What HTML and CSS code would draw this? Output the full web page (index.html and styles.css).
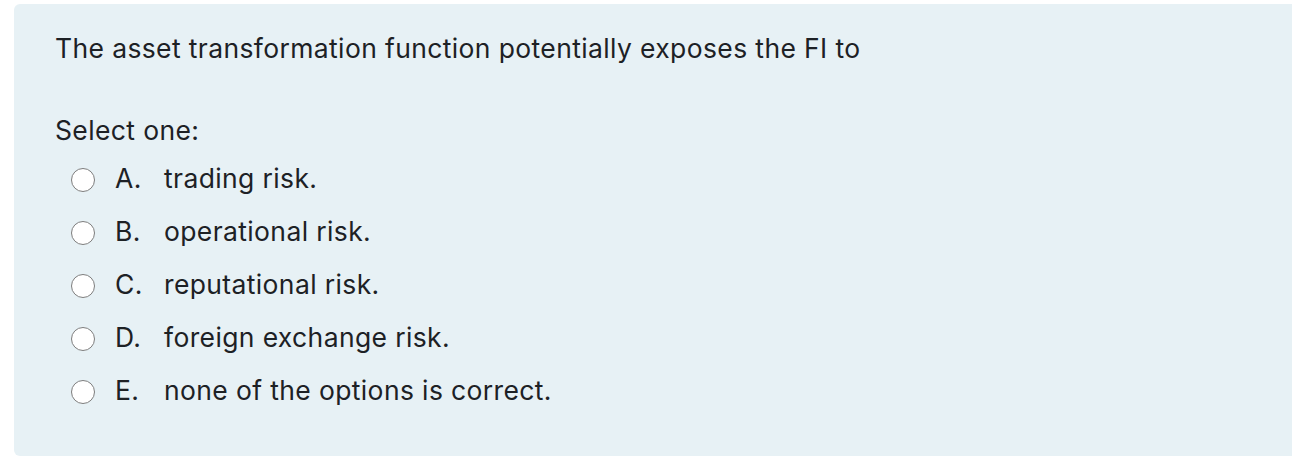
FILE: index.html
```html
<!DOCTYPE html>
<html>
<head>
<meta charset="utf-8">
<link rel="stylesheet" href="styles.css">
</head>
<body>
<div class="panel">
  <div class="qtext">The asset transformation function potentially exposes the FI to</div>
  <div class="prompt">Select one:</div>
  <div class="answers">
    <div class="opt"><span class="radio"></span><span class="letter">A.</span><span class="label">trading risk.</span></div>
    <div class="opt"><span class="radio"></span><span class="letter">B.</span><span class="label">operational risk.</span></div>
    <div class="opt"><span class="radio"></span><span class="letter">C.</span><span class="label">reputational risk.</span></div>
    <div class="opt"><span class="radio"></span><span class="letter">D.</span><span class="label">foreign exchange risk.</span></div>
    <div class="opt"><span class="radio"></span><span class="letter">E.</span><span class="label">none of the options is correct.</span></div>
  </div>
</div>
</body>
</html>
```
FILE: styles.css
```css
html, body {
  margin: 0;
  padding: 0;
  background: #ffffff;
}
body {
  padding: 4px 0 2px 14px;
  font-family: Inter, "Noto Sans", sans-serif;
  color: #1d2125;
  overflow: hidden;
  letter-spacing: 0.37px;
}
.panel {
  background: #e7f1f5;
  border-radius: 6px 0 0 6px;
  height: 452px;
  box-sizing: border-box;
  padding: 29px 0 0 41px;
}
.qtext {
  font-size: 26.5px;
  line-height: 30px;
}
.prompt {
  font-size: 26.5px;
  line-height: 30px;
  margin-top: 52px;
}
.answers {
  display: flex;
  flex-direction: column;
  gap: 23px;
  margin-top: 18px;
  padding-left: 16px;
}
.opt {
  display: flex;
  align-items: center;
  font-size: 26.5px;
  line-height: 30px;
}
.radio {
  width: 22px;
  height: 22px;
  border: 1.5px solid #7d7d7d;
  border-radius: 50%;
  background: #ffffff;
  flex: none;
  margin-top: 3px;
}
.letter {
  margin-left: 20px;
  width: 49px;
}
```
